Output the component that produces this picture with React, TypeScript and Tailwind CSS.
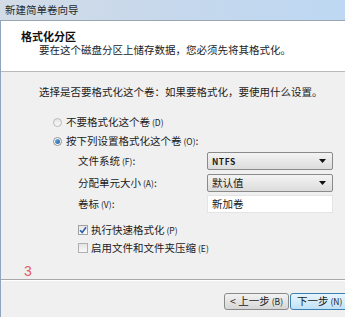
import React from "react";

const F = { fontFamily: '"Noto Sans CJK SC", "Noto Sans", sans-serif' };

function Small({ children }: { children: React.ReactNode }) {
  return <span className="text-[8.5px] ml-[2px]">{children}</span>;
}

function Select({ value, bold }: { value: string; bold?: boolean }) {
  return (
    <div className="ml-auto mr-[22px] w-[126px] h-[18px] rounded-[2px] border border-[#8a8a8a] bg-gradient-to-b from-[#f4f4f4] to-[#dcdcdc] flex items-center px-[4px]">
      <span className={bold ? "text-[8.5px] font-bold tracking-[0.5px]" : "text-[10.5px]"}>{value}</span>
      <svg className="ml-auto mr-[2px]" width="7" height="4" viewBox="0 0 7 4">
        <path d="M0 0 L7 0 L3.5 4 Z" fill="#111" />
      </svg>
    </div>
  );
}

export default function App() {
  return (
    <div
      className="w-[345px] h-[317px] overflow-hidden flex flex-col bg-[#a9c5e6] text-[#1b1b1b] leading-none"
      style={F}
    >
      <div className="h-[20px] flex items-center pl-[5px] bg-gradient-to-r from-[#d3dce6] via-[#c6d8ec] to-[#bed8f3] text-[10.5px] text-[#2a2a2a]">
        新建简单卷向导
      </div>
      <div className="flex-1 flex min-h-0">
        <div className="w-[4px] bg-gradient-to-b from-[#b4cbe6] to-[#9fc0e6]" />
        <div className="flex-1 flex flex-col bg-[#f0f0f0] border-l border-[#8fa5bf]">
          <div className="h-[52px] bg-white border-t border-[#9aa5b2] border-b border-b-[#b9b9b9] flex flex-col">
            <div className="mt-[10px] ml-[20px] text-[11px] font-bold text-[#111]">格式化分区</div>
            <div className="mt-[3px] ml-[38px] text-[10.5px] text-[#222]">
              要在这个磁盘分区上储存数据，您必须先将其格式化。
            </div>
          </div>
          <div className="flex flex-col">
            <div className="mt-[13px] ml-[38px] h-[14px] flex items-center text-[10.5px]">
              选择是否要格式化这个卷：如果要格式化，要使用什么设置。
            </div>
            <div className="mt-[14px] ml-[52px] h-[18px] flex items-center text-[10.5px]">
              <span className="w-[9px] h-[9px] rounded-full border border-[#b8b8b8] bg-gradient-to-b from-[#e6e6e6] to-[#f8f8f8]" />
              <span className="ml-[4px]">
                不要格式化这个卷<Small>(D)</Small>
              </span>
            </div>
            <div className="mt-[1px] ml-[52px] h-[18px] flex items-center text-[10.5px]">
              <span className="w-[9px] h-[9px] rounded-full border border-[#8e8f8f] bg-white flex items-center justify-center">
                <span className="w-[5px] h-[5px] rounded-full bg-gradient-to-br from-[#6ab4e8] to-[#1f5e9c]" />
              </span>
              <span className="ml-[4px]">
                按下列设置格式化这个卷<Small>(O)</Small>:
              </span>
            </div>
            <div className="mt-[2px] ml-[77px] h-[18px] flex items-center text-[10.5px]">
              <span>
                文件系统<Small>(F)</Small>:
              </span>
              <Select value="NTFS" bold />
            </div>
            <div className="mt-[4px] ml-[77px] h-[18px] flex items-center text-[10.5px]">
              <span>
                分配单元大小<Small>(A)</Small>:
              </span>
              <Select value="默认值" />
            </div>
            <div className="mt-[3px] ml-[77px] h-[18px] flex items-center text-[10.5px]">
              <span>
                卷标<Small>(V)</Small>:
              </span>
              <div className="ml-auto mr-[22px] w-[126px] h-[18px] bg-white border border-[#e4e4e4] flex items-center px-[4px]">
                新加卷
              </div>
            </div>
            <div className="mt-[9px] ml-[77px] h-[16px] flex items-center text-[10.5px]">
              <span className="w-[10px] h-[10px] border border-[#a0a0a0] bg-gradient-to-b from-[#e8e8e8] to-[#fafafa] flex items-center justify-center">
                <svg width="8" height="8" viewBox="0 0 8 8">
                  <path d="M1 4.2 L3.2 6.4 L7 1.2" stroke="#2d5ea8" strokeWidth="1.6" fill="none" />
                </svg>
              </span>
              <span className="ml-[3px]">
                执行快速格式化<Small>(P)</Small>
              </span>
            </div>
            <div className="mt-[2px] ml-[77px] h-[16px] flex items-center text-[10.5px]">
              <span className="w-[10px] h-[10px] border border-[#b0b0b0] bg-gradient-to-b from-[#e4e4e4] to-[#f8f8f8]" />
              <span className="ml-[3px]">
                启用文件和文件夹压缩<Small>(E)</Small>
              </span>
            </div>
            <div className="mt-[8px] ml-[23px] h-[14px] flex items-center text-[14px] text-[#e06060]" style={{ fontFamily: '"Liberation Sans", sans-serif' }}>
              3
            </div>
            <div className="mt-[1px] h-[1px] bg-[#a7a7a7]" />
            <div className="h-[1px] bg-white" />
            <div className="mt-[12px] flex items-center ml-[223px] gap-[1px]">
              <div className="w-[65px] h-[17px] rounded-[3px] border border-[#8a8a8a] bg-gradient-to-b from-[#f2f2f2] to-[#d6d6d6] flex items-center justify-center text-[10.5px]">
                &lt; 上一步<Small>(B)</Small>
              </div>
              <div className="w-[65px] h-[17px] rounded-[3px] border border-[#3c7fb1] bg-gradient-to-b from-[#e8f5fd] to-[#bfe2f7] flex items-center justify-start pl-[6px] text-[10.5px] shrink-0">
                下一步<Small>(N)</Small>
              </div>
            </div>
          </div>
        </div>
      </div>
    </div>
  );
}
